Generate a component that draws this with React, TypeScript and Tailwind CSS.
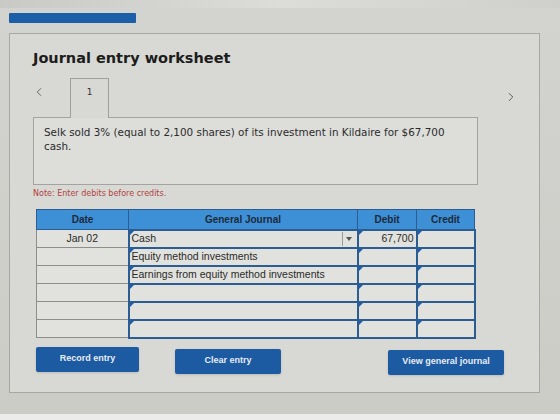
import { ChevronLeft, ChevronRight } from "lucide-react";

interface JournalRow {
  date: string;
  account: string;
  debit: string;
  credit: string;
}

const rows: JournalRow[] = [
  { date: "Jan 02", account: "Cash", debit: "67,700", credit: "" },
  { date: "", account: "Equity method investments", debit: "", credit: "" },
  { date: "", account: "Earnings from equity method investments", debit: "", credit: "" },
  { date: "", account: "", debit: "", credit: "" },
  { date: "", account: "", debit: "", credit: "" },
  { date: "", account: "", debit: "", credit: "" },
];

// little blue corner flag shown on editable cells
function Flag() {
  return (
    <span className="absolute left-0 top-0 h-0 w-0 border-r-[4px] border-t-[4px] border-r-transparent border-t-[#1f5cab]" />
  );
}

function Button({ label, className }: { label: string; className?: string }) {
  return (
    <button
      className={`h-[25px] rounded-[2px] bg-[#1c5aa2] text-[9px] font-bold text-[#e6ecf4] shadow-sm ${className ?? ""}`}
      style={{ fontFamily: '"Liberation Sans", Arial, sans-serif' }}
    >
      {label}
    </button>
  );
}

export default function App() {
  return (
    <div
      className="h-[420px] w-[560px] overflow-hidden bg-gradient-to-b from-[#d3d4cf] to-[#cbccc6]"
      style={{ fontFamily: '"DejaVu Sans", Verdana, sans-serif' }}
    >
      <div className="h-[8px] bg-gradient-to-r from-[#c9cac5] via-[#dcdcd8] to-[#cfd0cb]" />
      <div className="ml-[9px] mt-[5px] h-[10px] w-[127px] rounded-[1px] bg-[#1d5ea9]" />

      {/* worksheet panel */}
      <div className="ml-[9px] mt-[10px] h-[360px] w-[531px] border border-[#a7a8a3] bg-[#d8d9d4] pl-[23px] pt-[14px]">
        <h1 className="text-[14.5px] font-bold leading-[20px] text-[#1c1c1c]">Journal entry worksheet</h1>

        <div className="mt-[10px] flex h-[39px] w-[485px] items-start">
          <ChevronLeft className="ml-[-1px] mt-[7px] h-[14px] w-[14px] text-[#55565a]" strokeWidth={1.5} />
          <div className="relative z-10 ml-[24px] flex h-[40px] w-[39px] items-start justify-center border border-b-0 border-[#9fa09b] bg-[#d8d9d4] pt-[7px] text-[9px] text-[#333]">
            1
          </div>
          <ChevronRight className="ml-auto mt-[12px] h-[14px] w-[14px] text-[#4a4b4f]" strokeWidth={1.5} />
        </div>

        <div className="h-[68px] w-[445px] border border-[#a3a49f] bg-[#dddeda] pl-[10px] pr-[24px] pt-[7px] text-[10.4px] leading-[14px] text-[#2b2b2b]">
          Selk sold 3% (equal to 2,100 shares) of its investment in Kildaire for $67,700 cash.
        </div>

        <p className="mt-[3px] text-[8px] leading-[12px] text-[#b3413f]">Note: Enter debits before credits.</p>

        <table
          className="ml-[3px] mt-[9px] w-[438px] table-fixed border-collapse text-[10.5px] text-[#2a2a2a]"
          style={{ fontFamily: '"Liberation Sans", Arial, sans-serif' }}
        >
          <colgroup>
            <col className="w-[92px]" />
            <col className="w-[229px]" />
            <col className="w-[59px]" />
            <col className="w-[58px]" />
          </colgroup>
          <thead>
            <tr className="h-[20px] bg-[#3d8fd6] text-[10px] font-bold text-[#1d2a3a]">
              <th className="border border-[#2b5d92]">Date</th>
              <th className="border border-[#2b5d92]">General Journal</th>
              <th className="border border-[#2b5d92]">Debit</th>
              <th className="border border-[#2b5d92]">Credit</th>
            </tr>
          </thead>
          <tbody>
            {rows.map((row, idx) => (
              <tr key={idx} className="h-[18px] bg-[#e1e2dd]">
                <td className="border border-[#8e8f8b] text-center">{row.date}</td>
                <td className="relative border-2 border-[#2b5d92] px-[2px] text-left">
                  <Flag />
                  {idx === 0 ? (
                    <div className="flex items-center">
                      <span className="flex-1">{row.account}</span>
                      <span className="flex h-[14px] w-[13px] items-center justify-center border-l border-[#9a9b97]">
                        <span className="h-0 w-0 border-x-[3px] border-t-[4px] border-x-transparent border-t-[#555]" />
                      </span>
                    </div>
                  ) : (
                    row.account
                  )}
                </td>
                <td className="relative border-2 border-[#2b5d92] pr-[2px] text-right">
                  <Flag />
                  {row.debit}
                </td>
                <td className="relative border-2 border-[#2b5d92] text-right">
                  <Flag />
                  {row.credit}
                </td>
              </tr>
            ))}
          </tbody>
        </table>

        <div className="ml-[3px] mt-[8px] flex w-[468px] items-start">
          <Button label="Record entry" className="w-[103px]" />
          <Button label="Clear entry" className="ml-[36px] mt-[2px] w-[106px]" />
          <Button label="View general journal" className="ml-auto mt-[3px] w-[116px]" />
        </div>
      </div>

      <div className="mt-[21px] h-[10px] bg-[#ecedea]" />
    </div>
  );
}
